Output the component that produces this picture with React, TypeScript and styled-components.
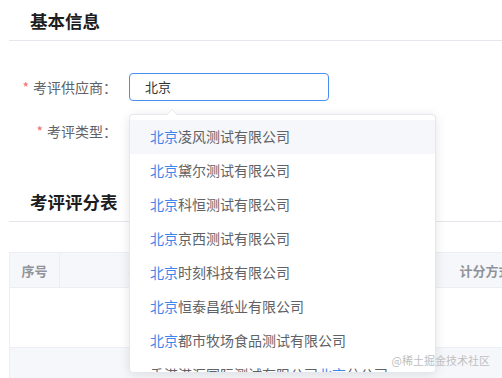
import styled, { createGlobalStyle } from 'styled-components'

const GlobalStyle = createGlobalStyle`
  html, body {
    margin: 0;
    padding: 0;
    background: #fff;
  }

  body {
    font-family: 'Noto Sans CJK SC', 'Noto Sans', sans-serif;
    color: #606266;
    overflow: hidden;
  }
`

const Page = styled.div`
  position: relative;
  width: 502px;
  height: 378px;
  padding-left: 9px;
  box-sizing: border-box;
  overflow: hidden;
`

const SectionTitle = styled.h2`
  margin: 0;
  height: 41px;
  padding-left: 21px;
  display: flex;
  align-items: center;
  font-size: 17.5px;
  font-weight: 700;
  color: #1d1d1f;
  border-bottom: 1px solid #e4e7ed;
  box-sizing: border-box;
`

const Form = styled.div`
  display: flex;
  flex-direction: column;
  gap: 16px;
  padding: 32px 0 36px;
`

const FormRow = styled.div`
  display: flex;
  align-items: center;
  height: 28px;
`

const Label = styled.label`
  width: 120px;
  padding-right: 12px;
  box-sizing: border-box;
  text-align: right;
  font-size: 14px;
  line-height: 28px;
  color: #606266;
  white-space: nowrap;

  &::before {
    content: '*';
    color: #f56c6c;
    margin-right: 4px;
  }
`

const Field = styled.div`
  position: relative;
  width: 200px;
  height: 28px;
`

const Input = styled.div`
  height: 100%;
  box-sizing: border-box;
  border: 1px solid #4a8ff0;
  border-radius: 4px;
  padding: 0 15px;
  font-size: 13px;
  line-height: 26px;
  color: #303133;
`

const Dropdown = styled.div`
  position: absolute;
  top: calc(100% + 13px);
  left: 0;
  width: 307px;
  height: 259px;
  box-sizing: border-box;
  background: #fff;
  border: 1px solid #e4e7ed;
  border-radius: 4px;
  box-shadow: 0 2px 12px rgba(0, 0, 0, 0.1);
  z-index: 10;

  &::before,
  &::after {
    content: '';
    position: absolute;
    left: 36px;
    width: 0;
    height: 0;
    border: 6px solid transparent;
    border-top-width: 0;
  }

  &::before {
    top: -6px;
    border-bottom-color: #e4e7ed;
  }

  &::after {
    top: -5px;
    border-bottom-color: #fff;
  }
`

const OptionList = styled.ul`
  list-style: none;
  margin: 0;
  padding: 5px 0 0;
  height: 100%;
  box-sizing: border-box;
  overflow: hidden;
  border-radius: 4px;
`

const Option = styled.li<{ $active?: boolean }>`
  height: 34px;
  padding: 0 20px 2px;
  box-sizing: border-box;
  display: flex;
  align-items: center;
  font-size: 14px;
  color: #606266;
  white-space: nowrap;
  background: ${({ $active }) => ($active ? '#f5f7fa' : 'transparent')};
`

const Match = styled.span`
  color: #3d86ea;
`

const Table = styled.div`
  margin-top: 30px;
  border-left: 1px solid #ebeef5;
`

const TableRow = styled.div<{ $height: number; $shade?: boolean; $top?: boolean }>`
  display: grid;
  grid-template-columns: 50px 190px 186px 100px;
  height: ${({ $height }) => $height}px;
  background: ${({ $shade }) => ($shade ? '#f5f7fa' : '#fff')};
  border-top: ${({ $top }) => ($top ? '1px solid #ebeef5' : '0')};
  border-bottom: 1px solid #ebeef5;
  box-sizing: border-box;
`

const HeadCell = styled.div`
  display: flex;
  align-items: center;
  justify-content: center;
  font-size: 13px;
  font-weight: 700;
  color: #909399;
  border-right: 1px solid #ebeef5;
  white-space: nowrap;
`

const Watermark = styled.div`
  position: absolute;
  right: 12px;
  bottom: 10px;
  font-size: 11px;
  color: #c0c0c0;
  z-index: 20;
`

const companies: [string, string, string][] = [
  ['', '北京', '凌风测试有限公司'],
  ['', '北京', '黛尔测试有限公司'],
  ['', '北京', '科恒测试有限公司'],
  ['', '北京', '京西测试有限公司'],
  ['', '北京', '时刻科技有限公司'],
  ['', '北京', '恒泰昌纸业有限公司'],
  ['', '北京', '都市牧场食品测试有限公司'],
  ['香港港汇国际测试有限公司', '北京', '分公司'],
]

export default function App() {
  return (
    <>
      <GlobalStyle />
      <Page>
        <SectionTitle>基本信息</SectionTitle>
        <Form>
          <FormRow>
            <Label>考评供应商：</Label>
            <Field>
              <Input>北京</Input>
              <Dropdown>
                <OptionList>
                  {companies.map(([before, match, after], i) => (
                    <Option key={i} $active={i === 0}>
                      {before}
                      <Match>{match}</Match>
                      {after}
                    </Option>
                  ))}
                </OptionList>
              </Dropdown>
            </Field>
          </FormRow>
          <FormRow>
            <Label>考评类型：</Label>
          </FormRow>
        </Form>
        <SectionTitle>考评评分表</SectionTitle>
        <Table>
          <TableRow $height={36} $shade $top>
            <HeadCell>序号</HeadCell>
            <HeadCell>考评项目</HeadCell>
            <HeadCell>考评标准</HeadCell>
            <HeadCell>计分方式</HeadCell>
          </TableRow>
          <TableRow $height={60} />
          <TableRow $height={40} $shade />
        </Table>
        <Watermark>@稀土掘金技术社区</Watermark>
      </Page>
    </>
  )
}
